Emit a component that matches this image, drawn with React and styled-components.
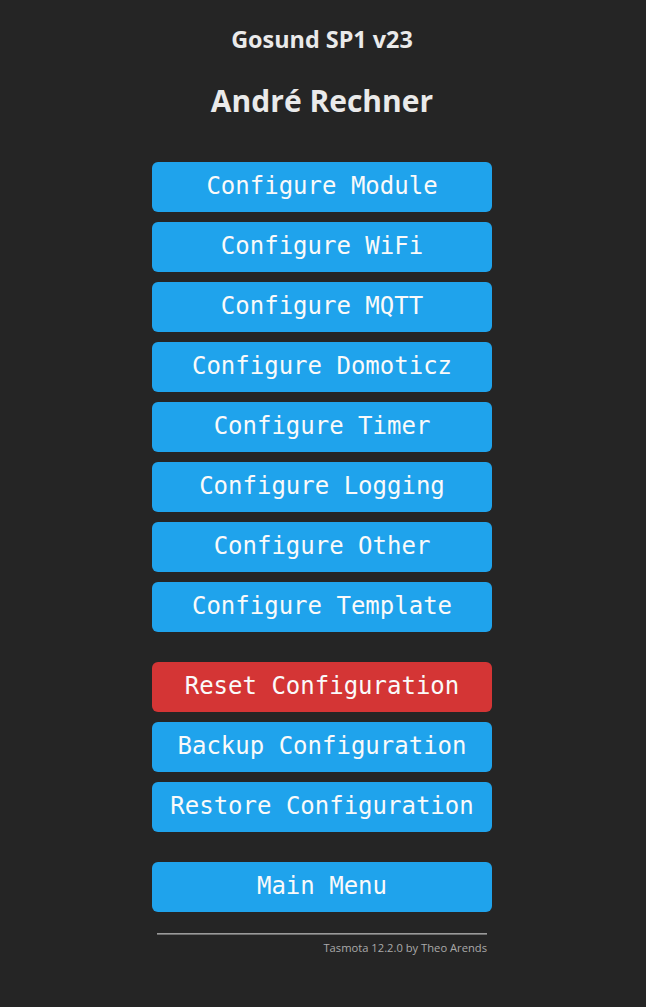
import React from "react";
import styled, { createGlobalStyle } from "styled-components";

const Global = createGlobalStyle`
  html, body { margin: 0; padding: 0; background: #252525; }
  body { color: #eaeaea; font-family: "Open Sans", "Noto Sans", sans-serif; }
`;

const Page = styled.div`
  display: flex;
  justify-content: center;
  padding-right: 2px;
  min-height: 1007px;
`;

const Container = styled.div`
  width: 340px;
  display: flex;
  flex-direction: column;
`;

const Header = styled.div`
  text-align: center;
  padding-top: 24px;
`;

const DeviceName = styled.h3`
  margin: 0;
  font-size: 23.4px;
  line-height: 30px;
  font-weight: 700;
`;

const FriendlyName = styled.h2`
  margin: 27px 0 0;
  font-size: 30px;
  line-height: 40px;
  font-weight: 700;
`;

const Menu = styled.div`
  display: flex;
  flex-direction: column;
  gap: 10px;
  margin-top: 41px;
`;

const Group = styled.div`
  display: flex;
  flex-direction: column;
  gap: 10px;
  & + & { margin-top: 20px; }
`;

const Button = styled.button`
  width: 100%;
  height: 50px;
  border: 0;
  border-radius: 6px;
  padding: 0 0 2px;
  background: ${(p) => (p.$danger ? "#d43535" : "#1fa3ec")};
  color: #fafafa;
  font-family: "DejaVu Sans Mono", monospace;
  font-size: 24px;
  line-height: 48px;
  cursor: pointer;
`;

const Footer = styled.div`
  margin: 21px 5px 0;
  text-align: right;
  font-size: 11.2px;
`;

const Rule = styled.div`
  height: 0;
  border-top: 1px solid #9a9a9a;
  border-bottom: 1px solid #6e6e6e;
`;

const Credit = styled.div`
  color: #aaa;
  line-height: 15px;
  margin-top: 5px;
`;

const groups = [
  [
    "Configure Module",
    "Configure WiFi",
    "Configure MQTT",
    "Configure Domoticz",
    "Configure Timer",
    "Configure Logging",
    "Configure Other",
    "Configure Template",
  ],
  ["Reset Configuration", "Backup Configuration", "Restore Configuration"],
  ["Main Menu"],
];

export default function App() {
  return (
    <>
      <Global />
      <Page>
        <Container>
          <Header>
            <DeviceName>Gosund SP1 v23</DeviceName>
            <FriendlyName>André Rechner</FriendlyName>
          </Header>
          <Menu>
            {groups.map((g, i) => (
              <Group key={i}>
                {g.map((label) => (
                  <Button key={label} $danger={label.startsWith("Reset")}>
                    {label}
                  </Button>
                ))}
              </Group>
            ))}
          </Menu>
          <Footer>
            <Rule />
            <Credit>Tasmota 12.2.0 by Theo Arends</Credit>
          </Footer>
        </Container>
      </Page>
    </>
  );
}
